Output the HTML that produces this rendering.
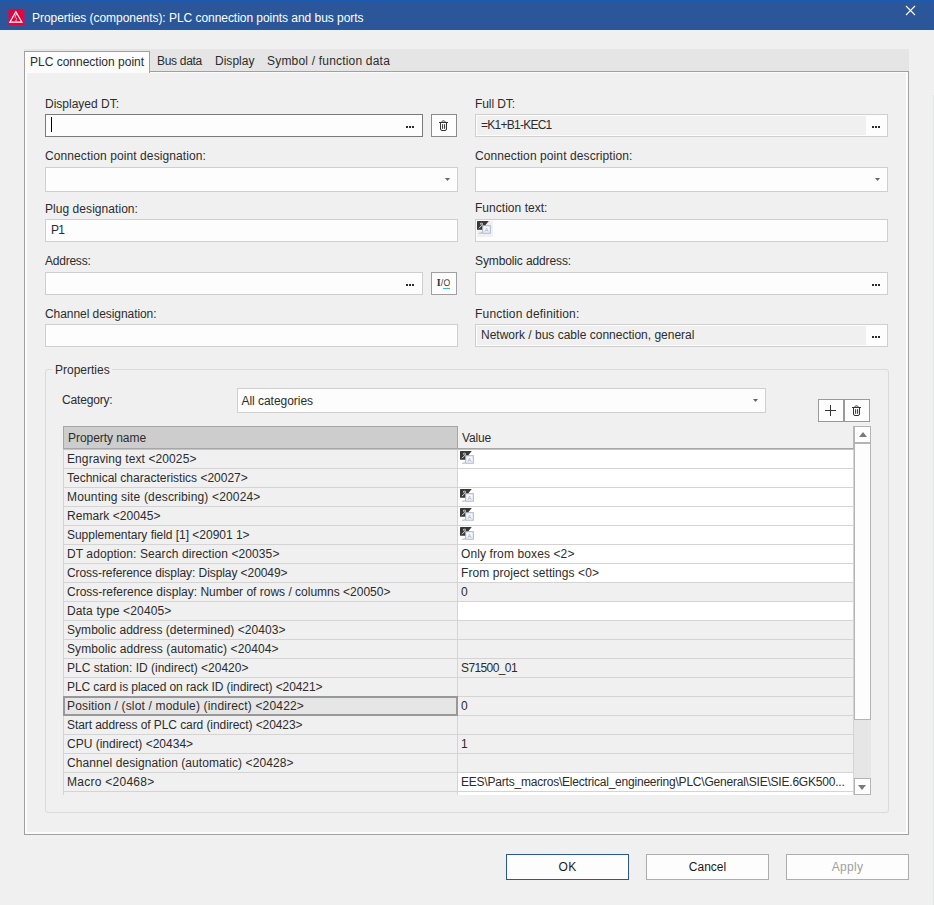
<!DOCTYPE html>
<html><head><meta charset="utf-8"><title>Properties (components): PLC connection points and bus ports</title>
<style>
html,body{margin:0;padding:0}
body{width:934px;height:905px;background:#f0f0f0;position:relative;overflow:hidden;font-family:"Liberation Sans",sans-serif;font-size:12px;color:#2c2c2c}
.a{position:absolute;box-sizing:border-box;white-space:nowrap}
.lbl{height:16px;line-height:16px}
.inp{background:#fdfdfd;border:1px solid #cfcfcf;height:23px;line-height:21px;padding-left:5px}
.ro{background:#f0f0f0;box-shadow:inset 0 0 0 1px #fdfdfd}
.btn{background:#fdfdfd;border:1px solid #adadad;text-align:center}
.dots{position:absolute;width:2px;height:2px;background:#2a2a2a;box-shadow:3px 0 0 #2a2a2a,6px 0 0 #2a2a2a}
.arr{position:absolute;width:5px;height:3px;background:#666;clip-path:polygon(0 0,100% 0,50% 100%)}
.row{position:absolute;left:63px;width:791px;height:19px;box-sizing:border-box}
.nm{position:absolute;left:0;top:0;width:395px;height:19px;box-sizing:border-box;border-right:1px solid #d4d4d4;border-bottom:1px solid #d4d4d4;border-left:1px solid #d4d4d4;padding-left:3px;line-height:19px;background:#f0f0f0;white-space:nowrap;overflow:hidden}
.vl{position:absolute;left:395px;top:0;width:396px;height:19px;box-sizing:border-box;border-bottom:1px solid #d4d4d4;border-right:1px solid #d4d4d4;padding-left:3px;line-height:19px;white-space:nowrap;overflow:hidden}
.w{background:#fff}.g{background:#f0f0f0}
.tic{position:absolute;left:2px;top:1px}
</style></head><body>
<!-- title bar -->
<div class="a" style="left:0;top:0;width:934px;height:30px;background:#2b579a;border-top:1px solid #1c5bb4;border-right:1px solid #1c5bb4;border-bottom:1px solid #44546a"></div>
<div class="a" style="left:3px;top:29px;width:10px;height:1px;background:#2456a4"></div>
<div class="a" style="left:0;top:30px;width:934px;height:1px;background:#e9f2f9"></div>
<div class="a" style="left:933px;top:95px;width:1px;height:810px;background:#cdeaf9"></div>
<div class="a" style="left:7.4px;top:9px;width:17.3px;height:16px;background:#8b2d76"></div>
<div class="a" style="left:9px;top:9px;width:14px;height:16px;background:#e6003c"><svg width="14" height="16" viewBox="0 0 14 16" style="display:block"><path d="M6.9 2.7L12.9 13.1H0.9Z" fill="none" stroke="#fff" stroke-width="1.15" stroke-linejoin="miter"/><path d="M7.3 5.2L5.9 8.3L7.6 9.6L6.8 12.2" fill="none" stroke="#fff" stroke-width="1" stroke-dasharray="1.6 0.8"/></svg></div>
<div class="a" style="left:32px;top:9px;height:18px;line-height:18px;color:#fff;font-size:12px"><span style="letter-spacing:-0.045px">Properties (components): PLC connection points and bus ports</span></div>
<svg class="a" style="left:905px;top:5px" width="11" height="11" viewBox="0 0 11 11"><path d="M1 1L10 10M10 1L1 10" stroke="#fff" stroke-width="1.1" fill="none"/></svg>

<!-- tab strip -->
<div class="a" style="left:24px;top:49px;width:885px;height:23px;background:#e5e5e5"></div>
<div class="a" style="left:24px;top:71px;width:885px;height:764px;border:1px solid #a0a0a0;background:#f0f0f0;box-shadow:inset 2px 1px 0 #fcfcfc, inset -2px -2px 0 #fcfcfc"></div>
<div class="a" style="left:24px;top:51px;width:126px;height:22px;border:1px solid #a0a0a0;border-bottom:none;background:#fcfcfc;line-height:20px;padding-left:5px">PLC connection point</div>
<div class="a lbl" style="left:157px;top:53px"><span style="letter-spacing:-0.297px">Bus data</span></div>
<div class="a lbl" style="left:215px;top:53px"><span style="letter-spacing:0.020px">Display</span></div>
<div class="a lbl" style="left:267px;top:53px"><span style="letter-spacing:0.194px">Symbol / function data</span></div>

<div class="a lbl" style="left:45px;top:96px">Displayed DT:</div>
<div class="a lbl" style="left:475px;top:96px"><span style="letter-spacing:-0.084px">Full DT:</span></div>
<div class="a lbl" style="left:45px;top:148px"><span style="letter-spacing:0.099px">Connection point designation:</span></div>
<div class="a lbl" style="left:475px;top:148px"><span style="letter-spacing:0.094px">Connection point description:</span></div>
<div class="a lbl" style="left:45px;top:201px"><span style="letter-spacing:0.054px">Plug designation:</span></div>
<div class="a lbl" style="left:475px;top:200px"><span style="letter-spacing:0.032px">Function text:</span></div>
<div class="a lbl" style="left:45px;top:253px"><span style="letter-spacing:-0.232px">Address:</span></div>
<div class="a lbl" style="left:475px;top:253px"><span style="letter-spacing:-0.120px">Symbolic address:</span></div>
<div class="a lbl" style="left:45px;top:306px"><span style="letter-spacing:-0.063px">Channel designation:</span></div>
<div class="a lbl" style="left:475px;top:306px"><span style="letter-spacing:0.188px">Function definition:</span></div>
<div class="a inp" style="left:45px;top:114px;width:378px;border-color:#7a7a7a"><div class="a" style="left:5px;top:2px;width:1px;height:15px;background:#000"></div><div class="dots" style="left:360px;top:11px"></div></div>
<div class="a btn" style="left:431px;top:114px;width:26px;height:23px;border-color:#8a8a8a"><div class="a" style="left:7px;top:5px"><svg width="10" height="12" viewBox="0 0 10 12"><path d="M0 2.5H9M2.7 2.4C2.7 0.3 6.3 0.3 6.3 2.4M1.5 2.8V9Q1.5 10.5 3 10.5H6Q7.5 10.5 7.5 9V2.8M3.6 4.2V8.8M5.6 4.2V8.8" stroke="#333" stroke-width="1" fill="none"/></svg></div></div>
<div class="a inp" style="left:475px;top:114px;width:413px"><div class="a" style="left:1px;top:1px;width:389px;height:19px;background:#f0f0f0;line-height:19px;padding-left:4px"><span style="letter-spacing:-0.747px">=K1+B1-KEC1</span></div><div class="dots" style="left:396px;top:11px"></div></div>
<div class="a inp" style="left:45px;top:167px;width:413px;height:25px"><div class="arr" style="left:399px;top:10px"></div></div>
<div class="a inp" style="left:475px;top:167px;width:413px;height:25px"><div class="arr" style="left:399px;top:10px"></div></div>
<div class="a inp" style="left:45px;top:219px;width:413px"><span style="letter-spacing:-0.8px">P1</span></div>
<div class="a inp" style="left:475px;top:219px;width:413px"><div class="a" style="left:1px;top:1px;width:16px;height:16px;background:#f0f0f0"></div><svg class="tic" style="left:1px;top:1px" width="15" height="14" viewBox="0 0 15 14"><path d="M0 0.6Q0 0 0.6 0H11.8L8.7 3.8V8.8H0.6Q0 8.8 0 8.2Z" fill="#383838"/><path d="M3.3 3L4.5 1.8L5.7 3L4.5 4.2ZM4.9 4.3L2 7.2" stroke="#f2f2f2" stroke-width="0.9" fill="none"/><path d="M5.6 10.6L4.6 12.2H2.1" stroke="#a9b4c8" stroke-width="1" fill="none"/><rect x="5.7" y="4.7" width="7.6" height="7.5" fill="#f6f8fc" stroke="#a9b4c8" stroke-width="1"/><text x="9.5" y="11" font-size="6" text-anchor="middle" fill="#a0a8b8" font-family="Liberation Sans, sans-serif">A</text></svg></div>
<div class="a inp" style="left:45px;top:272px;width:378px"><div class="dots" style="left:360px;top:11px"></div></div>
<div class="a btn" style="left:431px;top:272px;width:26px;height:23px;border-color:#a0a0a0"><svg class="a" style="left:0;top:0" width="24" height="21" viewBox="0 0 24 21"><text x="4.8" y="13.2" font-family="Liberation Serif, serif" font-weight="bold" font-size="10" fill="#333">I</text><text x="8.8" y="13" font-family="Liberation Sans, sans-serif" font-size="9" fill="#444">/</text><text transform="translate(11.4 13.2) scale(0.88 1)" text-rendering="geometricPrecision" font-family="Liberation Sans, sans-serif" font-size="9.8" fill="#444">O</text><rect x="11" y="15" width="7" height="1" fill="#4fb3c8"/></svg></div>
<div class="a inp" style="left:475px;top:272px;width:413px"><div class="dots" style="left:396px;top:11px"></div></div>
<div class="a inp" style="left:45px;top:324px;width:413px"></div>
<div class="a inp" style="left:475px;top:324px;width:413px"><div class="a" style="left:1px;top:1px;width:389px;height:19px;background:#f0f0f0;line-height:19px;padding-left:4px">Network / bus cable connection, general</div><div class="dots" style="left:396px;top:11px"></div></div>
<div class="a" style="left:45px;top:369px;width:844px;height:444px;border:1px solid #dadada;border-radius:3px"></div>
<div class="a lbl" style="left:52px;top:362px;background:#f0f0f0;padding:0 2px 0 3px">Properties</div>
<div class="a lbl" style="left:62px;top:392px"><span style="letter-spacing:-0.170px">Category:</span></div>
<div class="a inp" style="left:237px;top:388px;width:529px;height:25px;line-height:25px;padding-left:3.5px;font-size:12px"><span style="letter-spacing:-0.039px">All categories</span><div class="arr" style="left:515px;top:10px"></div></div>
<div class="a btn" style="left:818px;top:399px;width:26px;height:23px;border-color:#9a9a9a"><svg class="a" style="left:5px;top:4px" width="13" height="13" viewBox="0 0 13 13"><path d="M6.5 1V12M1 6.5H12" stroke="#333" stroke-width="1" fill="none"/></svg></div>
<div class="a btn" style="left:844px;top:399px;width:26px;height:23px;border-color:#9a9a9a"><div class="a" style="left:7px;top:5px"><svg width="10" height="12" viewBox="0 0 10 12"><path d="M0 2.5H9M2.7 2.4C2.7 0.3 6.3 0.3 6.3 2.4M1.5 2.8V9Q1.5 10.5 3 10.5H6Q7.5 10.5 7.5 9V2.8M3.6 4.2V8.8M5.6 4.2V8.8" stroke="#333" stroke-width="1" fill="none"/></svg></div></div>
<div class="a" style="left:63px;top:449px;width:791px;height:1px;background:#c4c4c4"></div>
<div class="a" style="left:63px;top:426px;width:395px;height:23px;background:#cdcdcd;border:1px solid #a6a6a6;line-height:23px;padding-left:4px"><span style="letter-spacing:-0.054px">Property name</span></div>
<div class="a" style="left:458px;top:426px;width:396px;height:23px;border-bottom:1px solid #a6a6a6;border-right:1px solid #b8b8b8;line-height:24px;padding-left:4px"><span style="letter-spacing:-0.16px">Value</span></div>
<div class="row" style="top:450px"><div class="nm"><span style="letter-spacing:0.094px">Engraving text &lt;20025&gt;</span></div><div class="vl w"><svg class="tic" width="15" height="14" viewBox="0 0 15 14"><path d="M0 0.6Q0 0 0.6 0H11.8L8.7 3.8V8.8H0.6Q0 8.8 0 8.2Z" fill="#383838"/><path d="M3.3 3L4.5 1.8L5.7 3L4.5 4.2ZM4.9 4.3L2 7.2" stroke="#f2f2f2" stroke-width="0.9" fill="none"/><path d="M5.6 10.6L4.6 12.2H2.1" stroke="#a9b4c8" stroke-width="1" fill="none"/><rect x="5.7" y="4.7" width="7.6" height="7.5" fill="#f6f8fc" stroke="#a9b4c8" stroke-width="1"/><text x="9.5" y="11" font-size="6" text-anchor="middle" fill="#a0a8b8" font-family="Liberation Sans, sans-serif">A</text></svg></div></div>
<div class="row" style="top:469px"><div class="nm">Technical characteristics &lt;20027&gt;</div><div class="vl w"></div></div>
<div class="row" style="top:488px"><div class="nm"><span style="letter-spacing:0.158px">Mounting site (describing) &lt;20024&gt;</span></div><div class="vl w"><svg class="tic" width="15" height="14" viewBox="0 0 15 14"><path d="M0 0.6Q0 0 0.6 0H11.8L8.7 3.8V8.8H0.6Q0 8.8 0 8.2Z" fill="#383838"/><path d="M3.3 3L4.5 1.8L5.7 3L4.5 4.2ZM4.9 4.3L2 7.2" stroke="#f2f2f2" stroke-width="0.9" fill="none"/><path d="M5.6 10.6L4.6 12.2H2.1" stroke="#a9b4c8" stroke-width="1" fill="none"/><rect x="5.7" y="4.7" width="7.6" height="7.5" fill="#f6f8fc" stroke="#a9b4c8" stroke-width="1"/><text x="9.5" y="11" font-size="6" text-anchor="middle" fill="#a0a8b8" font-family="Liberation Sans, sans-serif">A</text></svg></div></div>
<div class="row" style="top:507px"><div class="nm"><span style="letter-spacing:0.055px">Remark &lt;20045&gt;</span></div><div class="vl w"><svg class="tic" width="15" height="14" viewBox="0 0 15 14"><path d="M0 0.6Q0 0 0.6 0H11.8L8.7 3.8V8.8H0.6Q0 8.8 0 8.2Z" fill="#383838"/><path d="M3.3 3L4.5 1.8L5.7 3L4.5 4.2ZM4.9 4.3L2 7.2" stroke="#f2f2f2" stroke-width="0.9" fill="none"/><path d="M5.6 10.6L4.6 12.2H2.1" stroke="#a9b4c8" stroke-width="1" fill="none"/><rect x="5.7" y="4.7" width="7.6" height="7.5" fill="#f6f8fc" stroke="#a9b4c8" stroke-width="1"/><text x="9.5" y="11" font-size="6" text-anchor="middle" fill="#a0a8b8" font-family="Liberation Sans, sans-serif">A</text></svg></div></div>
<div class="row" style="top:526px"><div class="nm"><span style="letter-spacing:-0.029px">Supplementary field [1] &lt;20901 1&gt;</span></div><div class="vl w"><svg class="tic" width="15" height="14" viewBox="0 0 15 14"><path d="M0 0.6Q0 0 0.6 0H11.8L8.7 3.8V8.8H0.6Q0 8.8 0 8.2Z" fill="#383838"/><path d="M3.3 3L4.5 1.8L5.7 3L4.5 4.2ZM4.9 4.3L2 7.2" stroke="#f2f2f2" stroke-width="0.9" fill="none"/><path d="M5.6 10.6L4.6 12.2H2.1" stroke="#a9b4c8" stroke-width="1" fill="none"/><rect x="5.7" y="4.7" width="7.6" height="7.5" fill="#f6f8fc" stroke="#a9b4c8" stroke-width="1"/><text x="9.5" y="11" font-size="6" text-anchor="middle" fill="#a0a8b8" font-family="Liberation Sans, sans-serif">A</text></svg></div></div>
<div class="row" style="top:545px"><div class="nm"><span style="letter-spacing:0.087px">DT adoption: Search direction &lt;20035&gt;</span></div><div class="vl w"><span style="letter-spacing:0.111px">Only from boxes &lt;2&gt;</span></div></div>
<div class="row" style="top:564px"><div class="nm"><span style="letter-spacing:-0.074px">Cross-reference display: Display &lt;20049&gt;</span></div><div class="vl w"><span style="letter-spacing:0.077px">From project settings &lt;0&gt;</span></div></div>
<div class="row" style="top:583px"><div class="nm">Cross-reference display: Number of rows / columns &lt;20050&gt;</div><div class="vl g">0</div></div>
<div class="row" style="top:602px"><div class="nm"><span style="letter-spacing:0.142px">Data type &lt;20405&gt;</span></div><div class="vl w"></div></div>
<div class="row" style="top:621px"><div class="nm"><span style="letter-spacing:0.046px">Symbolic address (determined) &lt;20403&gt;</span></div><div class="vl g"></div></div>
<div class="row" style="top:640px"><div class="nm"><span style="letter-spacing:0.076px">Symbolic address (automatic) &lt;20404&gt;</span></div><div class="vl g"></div></div>
<div class="row" style="top:659px"><div class="nm">PLC station: ID (indirect) &lt;20420&gt;</div><div class="vl g"><span style="letter-spacing:-0.601px">S71500_01</span></div></div>
<div class="row" style="top:678px"><div class="nm"><span style="letter-spacing:-0.083px">PLC card is placed on rack ID (indirect) &lt;20421&gt;</span></div><div class="vl g"></div></div>
<div class="row" style="top:697px"><div class="nm" style="top:-1px;height:20px;background:#e6e6e6;border:2px solid #989898;line-height:16px;padding-left:2px"><span style="letter-spacing:0.168px">Position / (slot / module) (indirect) &lt;20422&gt;</span></div><div class="vl g">0</div></div>
<div class="row" style="top:716px"><div class="nm"><span style="letter-spacing:-0.075px">Start address of PLC card (indirect) &lt;20423&gt;</span></div><div class="vl g"></div></div>
<div class="row" style="top:735px"><div class="nm">CPU (indirect) &lt;20434&gt;</div><div class="vl g">1</div></div>
<div class="row" style="top:754px"><div class="nm"><span style="letter-spacing:0.077px">Channel designation (automatic) &lt;20428&gt;</span></div><div class="vl g"></div></div>
<div class="row" style="top:773px"><div class="nm"><span style="letter-spacing:0.264px">Macro &lt;20468&gt;</span></div><div class="vl w"><span style="letter-spacing:-0.213px">EES\Parts_macros\Electrical_engineering\PLC\General\SIE\SIE.6GK500...</span></div></div>
<div class="row" style="top:792px;height:3px;overflow:hidden"><div class="nm"></div><div class="vl w"></div></div>
<div class="a" style="left:854px;top:426px;width:17px;height:369px;background:#e6e6e6"></div>
<div class="a" style="left:854px;top:426px;width:17px;height:17px;background:#fdfdfd;border:1px solid #b4b4b4"><div class="a" style="left:3.5px;top:5px;width:0;height:0;border-left:4.5px solid transparent;border-right:4.5px solid transparent;border-bottom:5px solid #7a7a7a"></div></div>
<div class="a" style="left:854px;top:443px;width:17px;height:277px;background:#fdfdfd;border:1px solid #b4b4b4"></div>
<div class="a" style="left:854px;top:778px;width:17px;height:17px;background:#fdfdfd;border:1px solid #b4b4b4"><div class="a" style="left:3px;top:6px;width:0;height:0;border-left:4.5px solid transparent;border-right:4.5px solid transparent;border-top:5px solid #7a7a7a"></div></div>
<div class="a btn" style="left:506px;top:854px;width:123px;height:26px;border-color:#2b579a;line-height:24px;color:#1a1a1a"><span style="letter-spacing:0.3px">OK</span></div>
<div class="a btn" style="left:646px;top:854px;width:123px;height:26px;line-height:24px;color:#1a1a1a">Cancel</div>
<div class="a btn" style="left:786px;top:854px;width:123px;height:26px;line-height:24px;color:#a0a0a0"><span style="letter-spacing:0.3px">Apply</span></div>
</body></html>
